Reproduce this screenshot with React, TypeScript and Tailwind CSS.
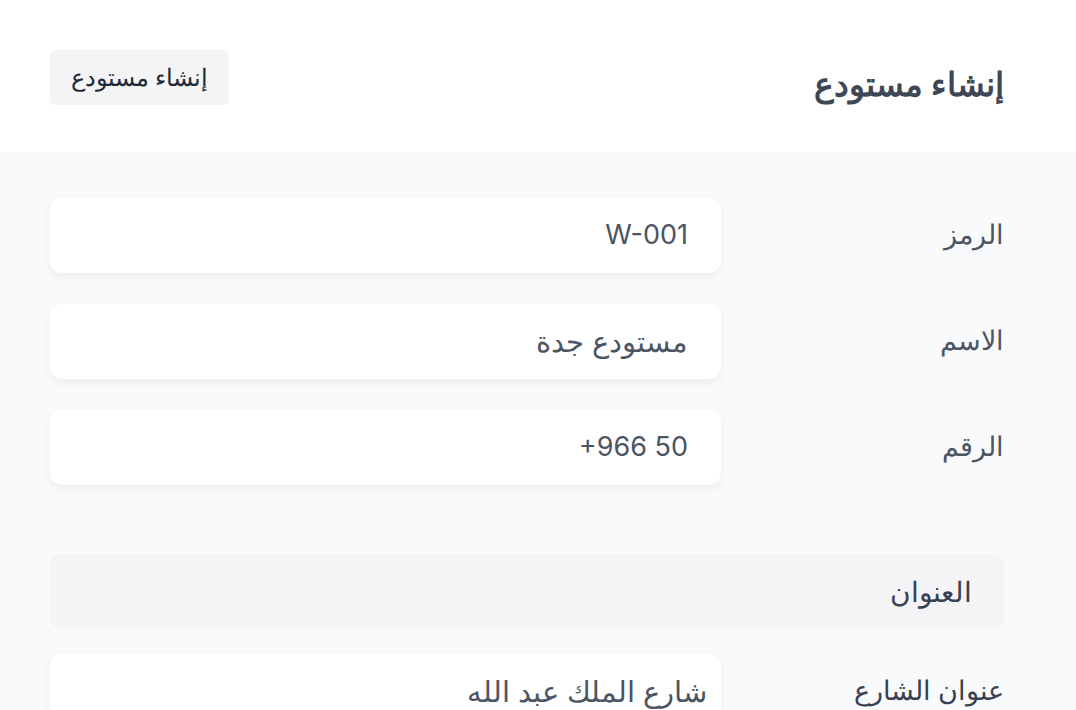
import React from "react";

const FIELDS = [
  { label: "الرمز", value: "W-001", ltr: true },
  { label: "الاسم", value: "مستودع جدة" },
  { label: "الرقم", value: "+966 50", ltr: true },
];

function FieldRow({
  label,
  value,
  ltr,
  bold,
  tight,
}: {
  label: string;
  value: string;
  ltr?: boolean;
  bold?: boolean;
  tight?: boolean;
}) {
  return (
    <div className="flex h-[75px] items-center">
      <div className={`flex-1 text-right text-[27px] ${bold ? "font-medium text-[#374151]" : "text-[#4b5563]"}`}>{label}</div>
      <div
        className={`flex h-full w-[671px] items-center rounded-xl bg-white shadow-[0_4px_10px_rgba(17,24,39,0.05)] ${
          tight ? "px-[14px]" : "px-[33px]"
        }`}
      >
        <span dir={ltr ? "ltr" : undefined} className={`${ltr ? "text-[27px]" : "text-[29px]"} text-[#4b5563]`}>
          {value}
        </span>
      </div>
    </div>
  );
}

export default function App() {
  return (
    <div dir="rtl" className="h-[710px] overflow-hidden bg-[#f9fafb] font-['Inter','Noto_Sans',sans-serif]">
      <header className="flex h-[152px] items-center justify-between bg-white pl-[50px] pr-[72px]">
        <h1 className="mt-[18px] text-[33px] font-semibold text-[#3f4654]">إنشاء مستودع</h1>
        <button className="mt-[3px] flex h-[55px] w-[179px] items-center justify-center rounded-md bg-[#f3f4f6] text-[24px] text-[#1f2937]">
          إنشاء مستودع
        </button>
      </header>
      <main className="flex flex-col pl-[50px] pr-[72px] pt-[46px]">
        <div className="flex flex-col gap-[31px]">
          {FIELDS.map((f) => (
            <FieldRow key={f.label} {...f} />
          ))}
        </div>
        <div className="mt-[69px] flex h-[75px] items-center rounded-xl bg-[#f4f4f7] pr-[32px] text-[28px] text-[#374151]">
          العنوان
        </div>
        <div className="mt-[25px]">
          <FieldRow label="عنوان الشارع" value="شارع الملك عبد الله" bold tight />
        </div>
      </main>
    </div>
  );
}
